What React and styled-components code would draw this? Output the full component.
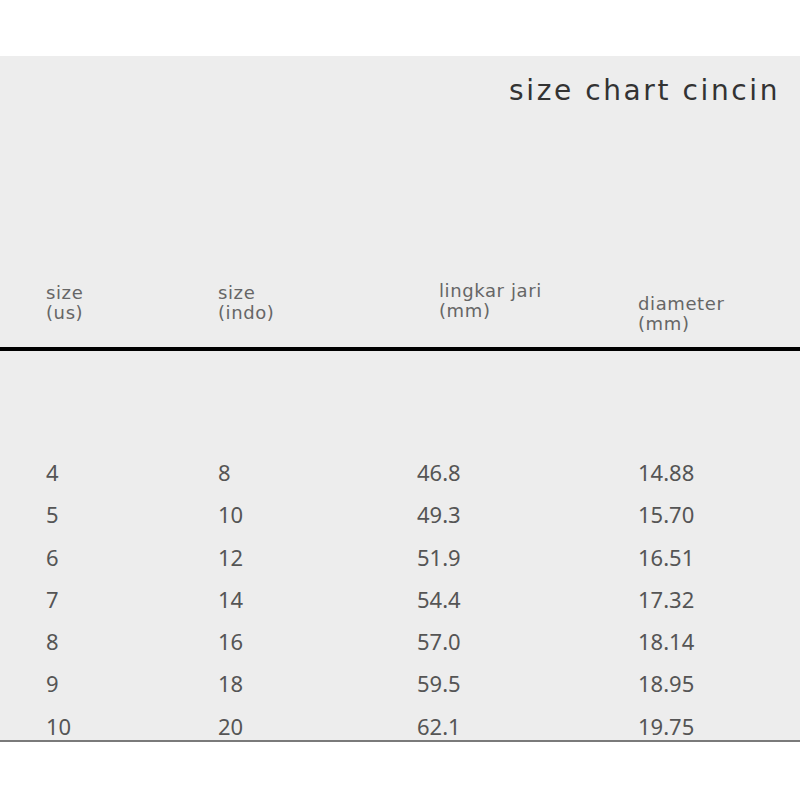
import React from 'react';
import styled, { createGlobalStyle } from 'styled-components';

const GlobalStyle = createGlobalStyle`
    html, body {
        margin: 0;
        padding: 0;
        background: #ffffff;
    }
`;

// 회색 차트 패널
const Panel = styled.div`
    margin-top: 56px;
    height: 684px;
    background-color: #ededed;
    border-bottom: 2px solid #7a7a7a;
    overflow: hidden;
    display: flex;
    flex-direction: column;
    font-family: "Noto Sans", "Open Sans", sans-serif;

    & > * {
        flex-shrink: 0;
    }
`;

const Title = styled.h1`
    margin: 15px 20px 0 auto;
    font-family: "DejaVu Sans", "Noto Sans", sans-serif;
    font-weight: 400;
    font-size: 28px;
    letter-spacing: 2.6px;
    line-height: 40px;
    color: #333333;
`;

const Grid = styled.div`
    display: grid;
    grid-template-columns: 172px 199px 221px 1fr;
    padding-left: 46px;
`;

const HeaderRow = styled(Grid)`
    margin-top: 172px;
    align-items: start;
`;

const HeaderCell = styled.div`
    font-family: "DejaVu Sans", "Noto Sans", sans-serif;
    font-size: 18px;
    letter-spacing: 0.6px;
    line-height: 20px;
    color: #666666;
    margin-top: ${(p) => p.$shift || 0}px;
    padding-left: ${(p) => p.$indent || 0}px;
`;

const Divider = styled.div`
    margin-top: 13px;
    height: 4px;
    background-color: #000000;
`;

const Body = styled.div`
    margin-top: 100px;
    display: flex;
    flex-direction: column;
`;

const DataRow = styled(Grid)`
    height: 42.3px;
    flex-shrink: 0;
    align-items: center;
`;

const DataCell = styled.div`
    font-size: 22px;
    line-height: 42.3px;
    color: #555555;
`;

const headers = [
    { lines: ['size', '(us)'], shift: 0 },
    { lines: ['size', '(indo)'], shift: 0 },
    { lines: ['lingkar jari', '(mm)'], shift: -2, indent: 22 },
    { lines: ['diameter', '(mm)'], shift: 11 },
];

const rows = [
    ['4', '8', '46.8', '14.88'],
    ['5', '10', '49.3', '15.70'],
    ['6', '12', '51.9', '16.51'],
    ['7', '14', '54.4', '17.32'],
    ['8', '16', '57.0', '18.14'],
    ['9', '18', '59.5', '18.95'],
    ['10', '20', '62.1', '19.75'],
];

const App = () => {
    return (
        <>
            <GlobalStyle />
            <Panel>
                <Title>size chart cincin</Title>
                <HeaderRow>
                    {headers.map((h, i) => (
                        <HeaderCell key={i} $shift={h.shift} $indent={h.indent}>
                            {h.lines[0]}
                            <br />
                            {h.lines[1]}
                        </HeaderCell>
                    ))}
                </HeaderRow>
                <Divider />
                <Body>
                    {rows.map((r, i) => (
                        <DataRow key={i}>
                            {r.map((v, j) => (
                                <DataCell key={j}>{v}</DataCell>
                            ))}
                        </DataRow>
                    ))}
                </Body>
            </Panel>
        </>
    );
};

export default App;
